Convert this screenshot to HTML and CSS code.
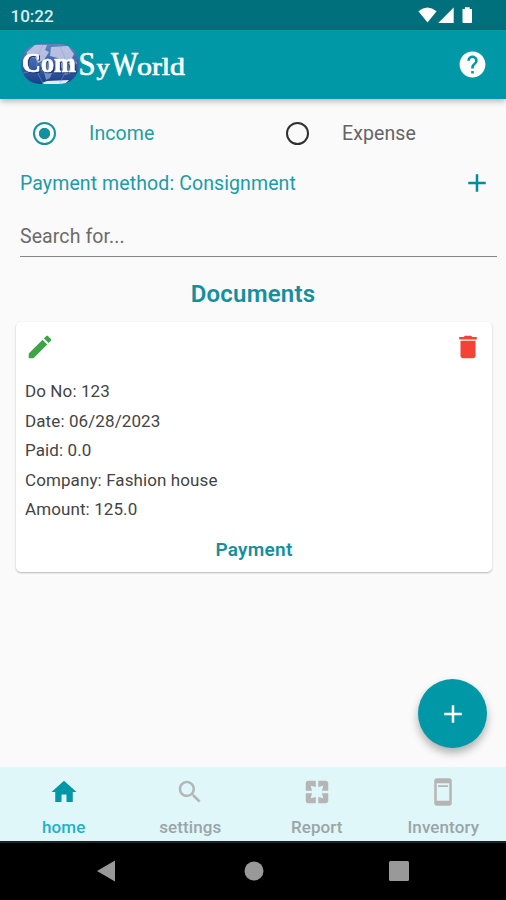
FILE: index.html
```html
<!DOCTYPE html>
<html lang="en">
<head>
<meta charset="utf-8">
<meta name="viewport" content="width=device-width">
<title>ComSyWorld</title>
<link rel="stylesheet" href="styles.css">
</head>
<body>
<div class="screen">
  <div class="status">
    <span class="clock">10:22</span>
    <svg class="signals" width="56" height="17" viewBox="0 0 56 17">
      <path d="M.4 4.2Q9.4-3.2 18.6 4.2L9.5 15.6z"/>
      <path d="M35.7.5V16H20.2z"/>
      <path d="M44.5 2h2.400V.3h4.800V2H54v13q0 1-1 1h-7.500q-1 0-1-1z"/>
    </svg>
  </div>
  <header class="appbar">
    <svg class="logo" width="170" height="48" viewBox="0 0 170 48">
      <defs>
        <linearGradient id="globe" x1="0" y1="0" x2="0" y2="1">
          <stop offset="0" stop-color="#6584bd"/><stop offset=".5" stop-color="#3d62aa"/><stop offset="1" stop-color="#173f88"/>
        </linearGradient>
        <clipPath id="globe-shape"><rect x="1" y="3" width="58" height="40" rx="19"/></clipPath>
      </defs>
      <g clip-path="url(#globe-shape)">
        <rect x="1" y="3" width="58" height="40" fill="url(#globe)"/>
        <path d="M7 11l8-7h12l-2 5 4 2-5 8-6 3-3-6-9 2zM31 6l17-1 6 8-2 4 5 5-4 5-6-6-6 2-3-6-8-2z" fill="#c8cde9" opacity=".85"/>
        <path d="M20 22l8-2 6 7-4 10-4 2-2-8zM39 22l9 1 3 9-6 2z" fill="#8da5d3" opacity=".75"/>
        <path d="M22 42l5-2 22-1-4 4H24z" fill="#e4e9f8"/>
        <path d="M3 32q26-7 55 0M23 4q-13 20 1 40M39 4q13 20 0 40" fill="none" stroke="#88a1d0" stroke-width=".8" opacity=".6"/>
      </g>
      <g class="logo-text">
        <text class="logo-bold" x="2" y="31" font-size="28" textLength="54" lengthAdjust="spacingAndGlyphs">Com</text>
        <text x="58.500" y="34" font-size="33" textLength="17" lengthAdjust="spacingAndGlyphs">S</text>
        <text x="76.500" y="34" font-size="24" textLength="13" lengthAdjust="spacingAndGlyphs">y</text>
        <text x="91" y="33.500" font-size="34" textLength="27" lengthAdjust="spacingAndGlyphs">W</text>
        <text x="117" y="34" font-size="26" textLength="48" lengthAdjust="spacingAndGlyphs">orld</text>
      </g>
    </svg>
    <svg class="icon help" viewBox="0 0 24 24"><path d="M12 2C6.480 2 2 6.480 2 12s4.480 10 10 10 10-4.480 10-10S17.520 2 12 2zm1 17h-2v-2h2v2zm2.070-7.750l-.9.920C13.450 12.900 13 13.500 13 15h-2v-.5c0-1.100.45-2.100 1.170-2.830l1.240-1.260c.37-.36.59-.86.59-1.410 0-1.100-.9-2-2-2s-2 .9-2 2H8c0-2.210 1.790-4 4-4s4 1.790 4 4c0 .88-.36 1.680-.93 2.250z"/></svg>
  </header>
  <main class="content">
    <div class="radios">
      <label class="radio selected"><span class="ring"></span><span class="radio-text income">Income</span></label>
      <label class="radio"><span class="ring"></span><span class="radio-text expense">Expense</span></label>
    </div>
    <div class="method">
      <span class="method-text">Payment method: Consignment</span>
      <svg class="icon plus" viewBox="0 0 24 24"><path d="M19 13h-6v6h-2v-6H5v-2h6V5h2v6h6v2z"/></svg>
    </div>
    <div class="search"><span class="search-text">Search for...</span></div>
    <h1 class="title"><span>Documents</span></h1>
    <section class="card">
      <div class="actions">
        <svg class="icon edit" viewBox="0 0 24 24"><path d="M3 17.250V21h3.750L17.810 9.940l-3.750-3.750L3 17.250zM20.710 7.040c.39-.39.39-1.020 0-1.410l-2.340-2.340c-.39-.39-1.020-.39-1.410 0l-1.830 1.830 3.750 3.750 1.830-1.830z"/></svg>
        <svg class="icon delete" viewBox="0 0 24 24"><path d="M6 19c0 1.100.9 2 2 2h8c1.100 0 2-.9 2-2V7H6v12zM19 4h-3.500l-1-1h-5l-1 1H5v2h14V4z"/></svg>
      </div>
      <ul class="details">
        <li>Do No: 123</li>
        <li>Date: 06/28/2023</li>
        <li>Paid: 0.0</li>
        <li>Company: Fashion house</li>
        <li>Amount: 125.0</li>
      </ul>
      <div class="payment"><span>Payment</span></div>
    </section>
    <div class="fab"><svg class="icon" viewBox="0 0 24 24"><path d="M19 13h-6v6h-2v-6H5v-2h6V5h2v6h6v2z"/></svg></div>
  </main>
  <nav class="tabs">
    <div class="tab active"><svg class="icon" viewBox="0 0 24 24"><path d="M10 20v-6h4v6h5v-8h3L12 3 2 12h3v8z"/></svg><span>home</span></div>
    <div class="tab"><svg class="icon" viewBox="0 0 24 24"><path d="M15.500 14h-.79l-.28-.27C15.410 12.590 16 11.110 16 9.500 16 5.910 13.090 3 9.500 3S3 5.910 3 9.500 5.910 16 9.500 16c1.610 0 3.090-.59 4.230-1.570l.27.28v.79l5 4.990L20.490 19l-4.990-5zm-6 0C7.010 14 5 11.990 5 9.500S7.010 5 9.500 5 14 7.010 14 9.500 11.990 14 9.500 14z"/></svg><span>settings</span></div>
    <div class="tab"><svg class="icon" viewBox="0 0 24 24"><path d="M3 5v6h5L7 7l4 1V3H5c-1.100 0-2 .9-2 2zm5 8H3v6c0 1.100.9 2 2 2h6v-5l-4 1 1-4zm9 4l-4-1v5h6c1.100 0 2-.9 2-2v-6h-5l1 4zm2-14h-6v5l4-1-1 4h5V5c0-1.100-.9-2-2-2z"/></svg><span>Report</span></div>
    <div class="tab"><svg class="icon" viewBox="0 0 24 24"><path fill-rule="evenodd" d="M7 1h10c1.100 0 2 .9 2 2v18c0 1.100-.9 2-2 2H7c-1.100 0-2-.9-2-2V3c0-1.100.9-2 2-2zM7 5v14h10V5zM8 6.500h8V8H8z"/></svg><span>Inventory</span></div>
  </nav>
  <div class="system">
    <svg width="18" height="22" viewBox="0 0 18 22"><path d="M0 11L18 .5v21z"/></svg>
    <svg width="20" height="20" viewBox="0 0 20 20"><circle cx="10" cy="10" r="9.500"/></svg>
    <svg width="20" height="20" viewBox="0 0 20 20"><rect width="20" height="20" rx="1.500"/></svg>
  </div>
</div>
</body>
</html>
```
FILE: styles.css
```css
* { box-sizing: border-box; }
body { margin: 0; font-family: Roboto, "Liberation Sans", sans-serif; background: #fafafa; }
svg { display: block; fill: currentColor; flex: none; }
.icon { width: 30px; height: 30px; }
.screen { width: 506px; height: 900px; display: flex; flex-direction: column; overflow: hidden; }

.status { height: 30px; flex: none; background: #00707c; color: #fff; display: flex; justify-content: space-between; align-items: center; padding: 0 32px 0 10.500px; }
.clock { font-size: 17px; font-weight: 500; color: #dcecee; padding-top: 2px; }

.appbar { position: relative; height: 69px; flex: none; background: #0097a7; color: #fff; display: flex; justify-content: space-between; align-items: center; padding: 0 18.500px 0 20px; box-shadow: 0 2px 6px rgba(60, 20, 20, .34); }
.logo-text { font-family: "Liberation Serif", serif; fill: #fff; stroke: #fff; stroke-width: .7; }
.logo-bold { font-weight: bold; filter: drop-shadow(1px 1px 0 #183468); }
.help { width: 31px; height: 31px; }

.content { position: relative; flex: 1; min-height: 0; display: flex; flex-direction: column; }
.radios { display: grid; grid-template-columns: 1fr 1fr; height: 68px; }
.radio { display: flex; align-items: center; padding-left: 33px; gap: 33px; color: #646464; }
.ring { width: 23px; height: 23px; border: 2.500px solid #303030; border-radius: 50%; }
.radio-text { font-size: 19.500px; letter-spacing: .1px; }
.selected { color: #259aa6; }
.selected .ring { border-color: #1690a0; background: radial-gradient(circle, #1690a0 5.300px, transparent 6px); }

.method { height: 32px; display: flex; justify-content: space-between; align-items: center; padding: 0 14px 0 20px; color: #209aa7; }
.method-text { font-size: 19.500px; letter-spacing: .1px; }
.plus { color: #008c9b; }
.search { height: 41px; margin: 17px 9px 0 20px; border-bottom: 1.500px solid #858585; display: flex; align-items: center; color: #6b6b6b; }
.search-text { font-size: 19.500px; letter-spacing: .1px; }
.title { margin: 0; height: 65px; padding-top: 8px; display: flex; align-items: center; justify-content: center; font-size: 24px; font-weight: 600; letter-spacing: .2px; color: #148f9e; }

.card { margin: 0 14px 0 16px; height: 250px; background: #fff; border-radius: 5px; box-shadow: 0 1px 2px rgba(0, 0, 0, .28); display: flex; flex-direction: column; }
.actions { display: flex; justify-content: space-between; padding: 10px 9.500px 0 8.500px; height: 55px; }
.edit { color: #3da545; }
.delete { color: #f44336; }
.details { margin: 0; padding: 0 0 0 9px; list-style: none; font-size: 17px; line-height: 29.500px; color: #444; letter-spacing: .1px; }
.payment { text-align: center; font-size: 19px; font-weight: 600; letter-spacing: .25px; color: #148f9e; padding-top: 14px; line-height: 22px; }

.fab { position: absolute; right: 19px; bottom: 19px; width: 69px; height: 69px; border-radius: 50%; background: #0097a7; color: #fff; display: flex; align-items: center; justify-content: center; box-shadow: 0 5px 9px rgba(0, 0, 0, .3); }

.tabs { height: 74px; flex: none; background: #e0f7fa; display: grid; grid-template-columns: repeat(4, 1fr); color: #b5b5b5; }
.tab { display: flex; flex-direction: column; align-items: center; padding: 10px 0 0 1px; }
.tab span { font-size: 17px; font-weight: 500; line-height: 20px; margin-top: 10px; color: #9ba5a7; letter-spacing: .1px; }
.active { color: #0097a7; }
.tab.active span { color: #22b0c8; }

.system { height: 59px; flex: none; background: #000; border-top: 2px solid #1b2424; color: #999; display: flex; align-items: center; justify-content: space-between; padding: 0 97px 2px; }
.system svg:nth-child(2) { margin-left: 3px; }
```
